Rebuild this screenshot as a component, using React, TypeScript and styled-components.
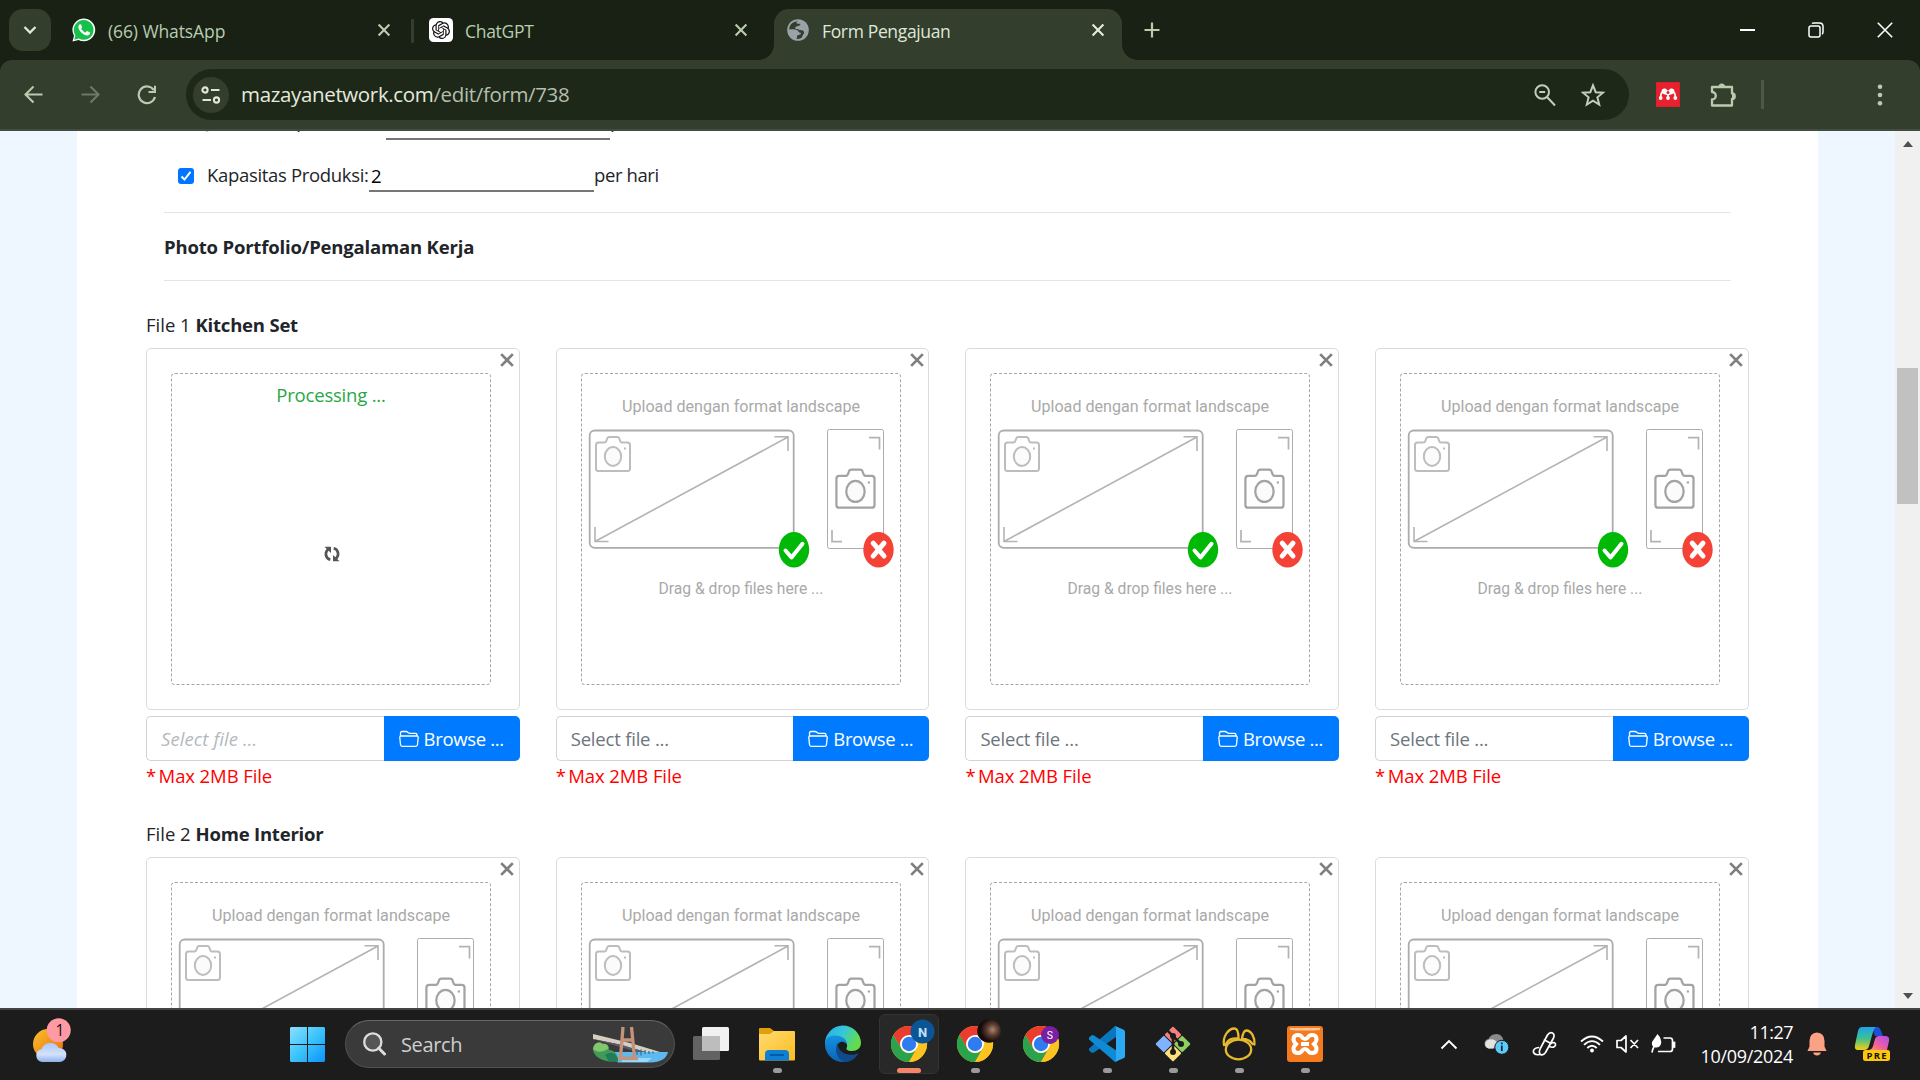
import React from "react";
import styled, { createGlobalStyle } from "styled-components";

const Global = createGlobalStyle`
  *, *::before, *::after { box-sizing: border-box; }
  html, body { margin: 0; padding: 0; overflow: hidden; background: #fff; }
  body { font-family: "Open Sans", "Noto Sans", sans-serif; }
  svg { display: block; flex: none; }
`;

const Screen = styled.div`
  width: 1920px;
  height: 1080px;
  display: flex;
  flex-direction: column;
  overflow: hidden;
`;

/* Text whose advance is tuned with letter spacing */
const Label = styled.span<{ size: number; ls?: number; color?: string; weight?: number }>`
  font-size: ${(p) => p.size}px;
  letter-spacing: ${(p) => p.ls ?? 0}px;
  color: ${(p) => p.color ?? "inherit"};
  font-weight: ${(p) => p.weight ?? 400};
  white-space: pre;
`;

/* ---------- browser chrome ---------- */
const TabStrip = styled.div`
  height: 60px;
  flex: none;
  background: #182114;
  display: flex;
  padding-left: 9px;
`;
const TabMenu = styled.div`
  width: 42px;
  height: 42px;
  margin: 9px 9px 0 0;
  border-radius: 14px;
  background: #333e2d;
  display: grid;
  place-items: center;
`;
const Tab = styled.div<{ $active?: boolean }>`
  position: relative;
  width: 348px;
  height: 51px;
  margin: 9px 9px 0 0;
  padding: 0 15px 9px 12px;
  display: flex;
  align-items: center;
  gap: 12px;
  color: ${(p) => (p.$active ? "#dfe8d8" : "#b9ccaf")};
  background: ${(p) => (p.$active ? "#333e2d" : "transparent")};
  border-radius: 15px 15px 0 0;
  &::before, &::after {
    content: "";
    display: ${(p) => (p.$active ? "block" : "none")};
    position: absolute;
    bottom: 0;
    width: 15px;
    height: 15px;
  }
  &::before { left: -15px; background: radial-gradient(circle at 0 0, transparent 14.5px, #333e2d 15px); }
  &::after { right: -15px; background: radial-gradient(circle at 100% 0, transparent 14.5px, #333e2d 15px); }
`;
const TabTitle = styled(Label)`
  flex: 1;
  padding-top: 1px;
`;
const TabDivider = styled.div`
  width: 3px;
  height: 24px;
  margin: 19px 3px 0 -6px;
  background: #333e2d;
  border-radius: 1px;
`;
const NewTab = styled.div`
  width: 42px;
  height: 42px;
  margin-top: 9px;
  display: grid;
  place-items: center;
`;
const WindowButtons = styled.div`
  margin-left: auto;
  display: flex;
  height: 59px;
  padding-right: 1px;
`;
const WindowButton = styled.div`
  width: 68.5px;
  display: grid;
  place-items: center;
`;
const ToolbarBack = styled.div`
  height: 71px;
  flex: none;
  background: #182114;
`;
const Toolbar = styled.div`
  height: 71px;
  background: #333e2d;
  border-bottom: 2px solid #434c41;
  border-radius: 12px 12px 0 0;
  display: flex;
  align-items: center;
  padding: 0 24px 0 5px;
`;
const NavButton = styled.div`
  width: 56.7px;
  display: grid;
  place-items: center;
`;
const Omnibox = styled.div`
  width: 1443px;
  height: 51px;
  margin-left: 11px;
  border-radius: 26px;
  background: #1e2819;
  display: flex;
  align-items: center;
  padding: 0 24px 0 7px;
`;
const SiteInfo = styled.div`
  width: 36px;
  height: 36px;
  border-radius: 50%;
  background: #333e2d;
  display: grid;
  place-items: center;
  margin-right: 12px;
`;
const Url = styled.div`
  flex: 1;
  display: flex;
  padding-bottom: 2px;
`;
const OmniActions = styled.div`
  display: flex;
  gap: 24px;
  align-items: center;
`;
const Extensions = styled.div`
  flex: 1;
  display: flex;
  align-items: center;
  padding-left: 27px;
  gap: 30px;
`;
const ToolDivider = styled.div`
  width: 3px;
  height: 29px;
  margin-left: -5px;
  background: #4b5a43;
`;
const MoreButton = styled.div`
  margin-left: auto;
  margin-right: 13.5px;
`;

/* ---------- web page ---------- */
const Viewport = styled.div`
  height: 877px;
  flex: none;
  display: flex;
  overflow: hidden;
  background: #eef7ff;
`;
const Page = styled.main`
  width: 1741px;
  margin: 0 77px;
  height: 877px;
  overflow: hidden;
  background: #fff;
  color: #212529;
  padding: 0 69px;
`;
const FormBlock = styled.div`
  margin: 0 18px;
`;
const FieldRow = styled.div<{ $top: number; $h: number; $left: number }>`
  display: flex;
  align-items: center;
  height: ${(p) => p.$h}px;
  margin-top: ${(p) => p.$top}px;
  padding-left: ${(p) => p.$left}px;
`;
const Check = styled.div`
  width: 16px;
  height: 16px;
  border-radius: 3px;
  background: #0075ff;
  display: grid;
  place-items: center;
  margin: 0 13px 2px 0;
`;
const FieldText = styled.div<{ $w?: number; $lift: number }>`
  width: ${(p) => (p.$w ? `${p.$w}px` : "auto")};
  padding-bottom: ${(p) => p.$lift}px;
  white-space: nowrap;
`;
const Underlined = styled.div<{ $w: number }>`
  width: ${(p) => p.$w}px;
  align-self: stretch;
  border-bottom: 2px solid #767676;
  padding: 0 0 1px 2px;
  color: #000;
  display: flex;
  align-items: center;
`;
const Rule = styled.div<{ $top: number }>`
  height: 1px;
  margin-top: ${(p) => p.$top}px;
  background: #e3e4e5;
`;
const Heading = styled.div`
  height: 67px;
  display: flex;
  align-items: center;
`;
const FileSection = styled.section<{ $top: number }>`
  margin-top: ${(p) => p.$top}px;
  height: 412px;
`;
const FileTitle = styled.div`
  height: 25px;
  display: flex;
  align-items: center;
  margin-bottom: 11px;
`;
const Columns = styled.div`
  display: grid;
  grid-template-columns: repeat(4, 373.6px);
  column-gap: 36.1px;
`;
const Card = styled.div`
  position: relative;
  height: 362px;
  border: 1px solid #d9dbdd;
  border-radius: 5px;
  padding: 24px;
`;
const CardClose = styled.div`
  position: absolute;
  top: 4px;
  right: 4.5px;
`;
const DropZone = styled.div`
  width: 320px;
  height: 312px;
  border: 1px dashed #a6a6a6;
  border-radius: 4px;
  display: flex;
  flex-direction: column;
  align-items: center;
`;
const Processing = styled.div`
  height: 44px;
  line-height: 41px;
  color: #28a745;
`;
const Spinner = styled.div`
  margin: 128px 0 0 2px;
`;
const InputGroup = styled.div`
  margin-top: 6px;
  height: 45px;
  display: flex;
`;
const FileInput = styled.div<{ $disabled?: boolean }>`
  flex: 1;
  border: 1px solid #ced4da;
  border-right: 0;
  border-radius: 5px 0 0 5px;
  display: flex;
  align-items: center;
  padding-left: 14px;
  color: ${(p) => (p.$disabled ? "#b4b9be" : "#6c757d")};
  font-style: ${(p) => (p.$disabled ? "italic" : "normal")};
`;
const Browse = styled.div`
  width: 136px;
  background: #007bff;
  border-radius: 0 5px 5px 0;
  color: #fff;
  display: flex;
  align-items: center;
  gap: 5px;
  padding-left: 15px;
`;
const MaxNote = styled.div`
  color: #f00;
  height: 31px;
  line-height: 29px;
`;
const ScrollTrack = styled.div`
  width: 25px;
  background: #f0f0f0;
  display: flex;
  flex-direction: column;
  align-items: center;
`;
const ScrollArrow = styled.div<{ $down?: boolean }>`
  border: 5.5px solid transparent;
  border-top: ${(p) => (p.$down ? "6px solid #505050" : "0")};
  border-bottom: ${(p) => (p.$down ? "0" : "6px solid #505050")};
  margin: ${(p) => (p.$down ? "auto 0 9px" : "10px 0 0")};
`;
const ScrollThumb = styled.div`
  width: 21px;
  height: 136px;
  margin-top: 221px;
  background: #c1c1c1;
`;

/* ---------- taskbar ---------- */
const Taskbar = styled.div`
  height: 72px;
  flex: none;
  background: #1c1c1c;
  border-top: 2px solid #434343;
  display: flex;
  color: #fff;
`;
const Widget = styled.div`
  width: 257px;
  padding: 8px 0 0 33px;
`;
const StartTile = styled.div`
  width: 88px;
  padding: 17px 0 0 33px;
`;
const SearchBox = styled.div`
  width: 330px;
  height: 48px;
  margin: 10px 12px 0 0;
  border-radius: 24px;
  background: #3a3a3a;
  border: 1px solid #505050;
  border-top-color: #666;
  display: flex;
  align-items: center;
  padding: 0 6px 0 17px;
  color: #cfcfcf;
`;
const SearchText = styled(Label)`
  flex: 1;
  padding-left: 15px;
`;
const Apps = styled.div`
  display: flex;
  gap: 6px;
  padding-top: 4px;
  margin-left: -6px;
`;
const AppTile = styled.div<{ $active?: boolean }>`
  width: 60px;
  height: 60px;
  border-radius: 6px;
  border: 1px solid ${(p) => (p.$active ? "#333" : "transparent")};
  background: ${(p) => (p.$active ? "#282828" : "transparent")};
  display: flex;
  flex-direction: column;
  align-items: center;
  padding-top: 11px;
  svg { overflow: visible; }
`;
const RunMark = styled.div<{ $active?: boolean }>`
  width: ${(p) => (p.$active ? 24 : 9)}px;
  height: 5px;
  flex: none;
  margin-top: 6px;
  border-radius: 3px;
  background: ${(p) => (p.$active ? "#f5846a" : "#9a9a9a")};
`;
const Tray = styled.div`
  margin-left: auto;
  display: flex;
  align-items: center;
  height: 68px;
  padding-right: 30px;
`;
const TrayIcon = styled.div<{ $w: number; $r: number }>`
  width: ${(p) => p.$w}px;
  margin-right: ${(p) => p.$r}px;
`;
const Clock = styled.div`
  width: 106px;
  display: flex;
  flex-direction: column;
  align-items: flex-end;
  line-height: 24px;
  margin-right: 14px;
`;

/* ---------- icons ---------- */
const Cross = ({ size, color, w }: { size: number; color: string; w: number }) => (
  <svg width={size} height={size} viewBox="0 0 12 12">
    <path d="M1 1L11 11M11 1L1 11" stroke={color} strokeWidth={w} />
  </svg>
);
const TabClose = ({ color }: { color: string }) => (
  <svg width="18" height="18" viewBox="0 0 18 18">
    <path d="M3.600 3.600L14.400 14.400M14.400 3.600L3.600 14.400" stroke={color} strokeWidth="2.100" />
  </svg>
);
const WhatsApp = () => (
  <svg width="24" height="24" viewBox="0 0 24 24">
    <path d="M.5 23.500L2 17.700A11.400 11.400 0 1 1 6.500 22Z" fill="#fff" />
    <path d="M2.200 21.800L3.400 17.400A9.900 9.900 0 1 1 6.900 20.600Z" fill="#16c04a" />
    <path d="M8 6.300c-.6 0-1.600.9-1.600 2.600 0 3.700 5.300 8.500 8.800 8.500 1.700 0 2.900-1.200 2.900-2.500 0-.4-.1-.5-.5-.7l-2.200-1c-.5-.2-.7 0-1 .4-.6.8-.8 1-1.200.8-1.900-.8-3.200-2.100-4-3.600-.2-.4.700-.9.900-1.500.1-.3-.7-2-1-2.600-.2-.4-.5-.4-1.100-.4z" fill="#fff" />
  </svg>
);
const ChatGPT = () => (
  <svg width="24" height="24" viewBox="0 0 24 24">
    <rect width="24" height="24" rx="4.500" fill="#fff" />
    <g transform="translate(3 3) scale(.75)">
      <path fill="#111" d="M22.282 9.821a5.985 5.985 0 0 0-.516-4.910 6.046 6.046 0 0 0-6.510-2.900A6.065 6.065 0 0 0 4.981 4.182a5.985 5.985 0 0 0-3.998 2.900 6.046 6.046 0 0 0 .743 7.097 5.980 5.980 0 0 0 .510 4.911 6.051 6.051 0 0 0 6.515 2.900A5.985 5.985 0 0 0 13.260 24a6.056 6.056 0 0 0 5.772-4.206 5.990 5.990 0 0 0 3.998-2.900 6.056 6.056 0 0 0-.748-7.073zM13.260 22.430a4.476 4.476 0 0 1-2.876-1.040l.141-.081 4.779-2.758a.795.795 0 0 0 .392-.681v-6.737l2.020 1.169a.071.071 0 0 1 .038.052v5.583a4.504 4.504 0 0 1-4.494 4.494zM3.600 18.304a4.471 4.471 0 0 1-.535-3.014l.142.085 4.783 2.759a.771.771 0 0 0 .781 0l5.843-3.369v2.332a.080.080 0 0 1-.033.062L9.740 19.950a4.500 4.500 0 0 1-6.140-1.646zM2.341 7.896a4.485 4.485 0 0 1 2.365-1.973v5.677a.766.766 0 0 0 .388.677l5.815 3.354-2.020 1.169a.076.076 0 0 1-.071 0l-4.830-2.787A4.504 4.504 0 0 1 2.341 7.896zm16.597 3.856l-5.834-3.388L15.120 7.200a.076.076 0 0 1 .071 0l4.830 2.791a4.494 4.494 0 0 1-.677 8.105v-5.678a.790.790 0 0 0-.407-.667zm2.010-3.023l-.142-.085-4.774-2.782a.776.776 0 0 0-.785 0L9.410 9.230V6.897a.066.066 0 0 1 .028-.061l4.830-2.787a4.500 4.500 0 0 1 6.680 4.660zM8.307 12.863l-2.020-1.164a.080.080 0 0 1-.038-.057V6.075a4.500 4.500 0 0 1 7.376-3.454l-.142.081-4.778 2.758a.795.795 0 0 0-.393.682zm1.098-2.366l2.602-1.500 2.607 1.500v2.999l-2.598 1.500-2.607-1.500z" />
    </g>
  </svg>
);
const Globe = () => (
  <svg width="24" height="24" viewBox="0 0 24 24">
    <circle cx="12" cy="12" r="10.800" fill="#9ba1a9" />
    <path d="M12.500 3.200C6.500 3 3.200 7 3.200 11.500c3-.6 6-.4 7.800.6 1.700 1 1.500 2.700 3.300 2.700 1 0 .9 1.300-.3 1.600-2.300.6-3.500 1-3 2.600.2.900-.3 1.500-.6 1.900 3 .2 5.800-.6 6-3 .1-1.300 1.600-1.300 1.700-3.200.1-1.700-1.500-2.700-3.600-2.700-1 0-2-.1-2.500-1-.8.2-2.300.3-2.700-.7-.4-1.200.8-2 2-2 .9 0 1-.7 1.900-.8 1.400-.1 1.500-1.300.6-1.700-1.200-.5-2.800.4-3.300-.8-.3-.9.7-1.500 2-1.800z" fill="#333e2d" />
  </svg>
);
const Mendeley = () => (
  <svg width="24" height="25" viewBox="0 0 24 25">
    <rect width="24" height="25" fill="#d9202c" />
    <rect x="1" y="1" width="22" height="23" fill="#e9212e" />
    <g fill="#fff">
      <path d="M4.700 15C4.700 11.500 6 9.500 8.300 9.500M19.300 15C19.300 11.500 18 9.500 15.700 9.500M12 11V15" fill="none" stroke="#fff" strokeWidth="1.700" />
      <path d="M5.500 9A3 3 0 0 1 11 8Q12 9 13 8A3 3 0 0 1 18.500 9Q18.500 12 15 12.500L12 13.500L9 12.500Q5.500 12 5.500 9Z" />
      <circle cx="12" cy="10.600" r="1.500" fill="#e9212e" />
      <circle cx="4.700" cy="16" r="1.900" /><circle cx="12" cy="16" r="1.900" /><circle cx="19.300" cy="16" r="1.900" />
    </g>
  </svg>
);

const Camera = ({ x, y, s, color }: { x: number; y: number; s: number; color: string }) => (
  <g transform={`translate(${x} ${y}) scale(${s})`} fill="none" stroke={color} strokeWidth="2">
    <path d="M3.500 6.500H9.500Q11 6.500 11.500 4.500L12 3Q12.500 1 14.500 1H22Q24 1 24.500 3L25 4.500Q25.500 6.500 27 6.500H32.500Q35 6.500 35 9V32.500Q35 35 32.500 35H3.500Q1 35 1 32.500V9Q1 6.500 3.500 6.500Z" />
    <ellipse cx="18" cy="20.500" rx="8.200" ry="9.400" fill="#fbfbfb" />
    <path d="M29 12.500h2" strokeWidth="1.800" />
  </g>
);

const UploadHint = () => (
  <svg width="318" height="310" viewBox="582 374 318 310" fontFamily="Roboto, sans-serif" fill="#a9a9a9">
    <text x="622" y="412" fontSize="16.500" textLength="238" lengthAdjust="spacingAndGlyphs">Upload dengan format landscape</text>
    <g fill="none" stroke="#acacac">
      <rect x="589.700" y="430.500" width="204" height="117.300" rx="5" strokeWidth="1.800" />
      <path d="M595 541.500L788 437M774.500 436.700H788V451M595 527V541.500H608.500" strokeWidth="1.600" stroke="#b3b3b3" />
      <rect x="827.500" y="429.500" width="56" height="119" rx="2" strokeWidth="1" />
      <path d="M869 437.700H879.500V449.500M832 530V541.700H842" strokeWidth="1.700" stroke="#b3b3b3" />
    </g>
    <Camera x={595} y={436} s={1} color="#bdbdbd" />
    <Camera x={835.3} y={468.5} s={1.12} color="#a3a3a3" />
    <ellipse cx="794" cy="549.700" rx="15.200" ry="17.800" fill="#00b906" />
    <path d="M785.500 550.500L791.500 557.500L802.500 543.800" fill="none" stroke="#fff" strokeWidth="4" strokeLinecap="round" strokeLinejoin="round" />
    <ellipse cx="878.500" cy="549.700" rx="15.200" ry="17.800" fill="#f44336" />
    <path d="M873.200 543.200L884 556M884 543.200L873.200 556" stroke="#fff" strokeWidth="5" strokeLinecap="round" />
    <text x="658.500" y="594" fontSize="16.500" textLength="165" lengthAdjust="spacingAndGlyphs">Drag &amp; drop files here ...</text>
  </svg>
);

const ChromeLogo = ({ children }: { children?: React.ReactNode }) => (
  <svg width="36" height="36" viewBox="0 0 36 36">
    <circle cx="18" cy="18" r="18" fill="#fbbc05" />
    <path d="M18 9H33.600A18 18 0 0 0 2.400 9L10.200 22.500Z" fill="#ea3d30" />
    <path d="M2.400 9A18 18 0 0 0 18 36L25.800 22.500A9 9 0 0 1 10.200 22.500Z" fill="#2ba24c" />
    <path d="M33.600 9H18L25.800 22.500L18 36A18 18 0 0 0 33.600 9Z" fill="#fcc420" />
    <circle cx="18" cy="18" r="9" fill="#fff" />
    <circle cx="18" cy="18" r="7.200" fill="#2f7bf0" />
    {children}
  </svg>
);

const Weather = () => (
  <svg width="40" height="46" viewBox="33 1018 40 46">
    <defs>
      <linearGradient id="sun" x1="0" y1="0" x2="1" y2="1"><stop offset="0" stopColor="#f6c12c" /><stop offset="1" stopColor="#f0690f" /></linearGradient>
      <linearGradient id="cloud" x1="0" y1="0" x2="0" y2="1"><stop offset="0" stopColor="#a9c8fa" /><stop offset=".6" stopColor="#d3e2fb" /><stop offset="1" stopColor="#8fb0ea" /></linearGradient>
    </defs>
    <circle cx="48" cy="1044" r="15" fill="url(#sun)" />
    <path d="M42 1062a6.500 6.500 0 0 1-.6-12.800 9.500 9.500 0 0 1 17.300-1.200A7 7 0 0 1 60 1062Z" fill="url(#cloud)" />
    <circle cx="58.700" cy="1030.300" r="12" fill="#ff99a4" />
    <text x="55.500" y="1036" fontSize="15.500" fill="#111" fontFamily="Open Sans, sans-serif">1</text>
  </svg>
);
const Bridge = () => (
  <svg width="76" height="38" viewBox="0 0 76 38">
    <path d="M12 27H76Q74 37 58 37.500H26Z" fill="#5db9ee" />
    <path d="M30 33h30l-5 4H30z" fill="#9bd9fb" />
    <path d="M1 9L40 18.500L68 27H50L30 20L1 14Z" fill="#d6cfc0" />
    <path d="M1 14L30 20L54 27H46L28 22Z" fill="#5d5870" />
    <path d="M45 24v6M49 24.500v6M53 25v4M57 26v3M61 26.500v2" stroke="#34729b" strokeWidth="1.300" />
    <path d="M31 2L28.500 33M39.500 2L42.500 33M31 15H41M26 33.500H46" stroke="#c4937a" strokeWidth="3.300" fill="none" />
    <path d="M1 25C1 17 8 16 11 19c4-1 7 3 6 6 6 0 9 5 9 11.500H17C8 35 2 31 1 25Z" fill="#3f9b57" />
    <path d="M1 24C2 17 8 16 11 19c4-1 6 3 5 5-5 3-11 4-15 0z" fill="#83c66b" />
    <path d="M13 30c6-5 13-1 13 6.500h-9z" fill="#217b5c" />
  </svg>
);
const WinLogo = () => (
  <svg width="35" height="35" viewBox="0 0 35 35">
    <defs><linearGradient id="win" gradientUnits="userSpaceOnUse" x1="0" y1="0" x2="35" y2="35"><stop offset="0" stopColor="#8be0ff" /><stop offset=".5" stopColor="#3cc4fb" /><stop offset="1" stopColor="#0a93fb" /></linearGradient></defs>
    <path d="M1 0H17V17H0V1ZM18 0H34L35 1V17H18ZM0 18H17V35H1L0 34ZM18 18H35V34L34 35H18Z" fill="url(#win)" />
  </svg>
);
const TaskView = () => (
  <svg width="36" height="36" viewBox="0 0 36 36">
    <rect x="0" y="10" width="27" height="24" rx="1.500" fill="#636363" />
    <rect x="9" y="1" width="27" height="24" rx="1.500" fill="#f1f1f1" />
    <path d="M9 10H27V25H9Z" fill="#bdbdbd" />
  </svg>
);
const Explorer = () => (
  <svg width="36" height="36" viewBox="0 0 36 36">
    <defs><linearGradient id="fold" x1="0" y1="0" x2="1" y2="1"><stop offset="0" stopColor="#ffda70" /><stop offset="1" stopColor="#fcbd20" /></linearGradient></defs>
    <path d="M0 3Q0 2 1 2H11L15 5V9H0Z" fill="#e0a108" />
    <path d="M0 8H11L15 5H35Q36 5 36 6V33Q36 34.500 35 34.500H1Q0 34.500 0 33Z" fill="url(#fold)" />
    <path d="M6 34.500V28Q6 24 10 24H26Q30 24 30 28V34.500Z" fill="#0f7fd6" />
    <path d="M11 29H25" stroke="#064f91" strokeWidth="1.500" />
  </svg>
);
const Edge = () => (
  <svg width="36" height="36" viewBox="0 0 36 36">
    <defs>
      <linearGradient id="e1" x1="0" y1="0" x2="1" y2=".4"><stop offset="0" stopColor="#2aa9e0" /><stop offset=".5" stopColor="#34c6e0" /><stop offset="1" stopColor="#63dc4b" /></linearGradient>
      <linearGradient id="e2" x1="0" y1="0" x2="0" y2="1"><stop offset="0" stopColor="#1493df" /><stop offset="1" stopColor="#0a63b8" /></linearGradient>
    </defs>
    <path d="M0 18A18 18 0 0 1 36 17C36 22 32 25 27 25C22 25 20.500 23 22 21C23 17 20 14 16 13.500C9 12.500 3 14 0 18Z" fill="url(#e1)" />
    <path d="M0 18C0 12 5 9 11 9.500C18 10 22.500 14 22 19C21 16 14 13 12 21C11 28 17 33 25 33.500Q21.500 36 18 36A18 18 0 0 1 0 18Z" fill="url(#e2)" />
    <path d="M14 15.500C9 20 10 33 20 36C27 36 32 31 33.500 27C29 30 21 29 17 26C13 23 12 18 14 15.500Z" fill="#114a8b" />
  </svg>
);
const VSCode = () => (
  <svg width="36" height="36" viewBox="0 0 36 36">
    <path d="M26 0L35 4V13L27 11L5 26.500L3 27L0 24.500V22.500Z" fill="#0a76be" />
    <path d="M0 11.500V13.500L26 36L28 35V25L5 9.500L3 9Z" fill="#0f8bd5" />
    <path d="M26 0L35 4Q36 4.500 36 6V30Q36 31.500 35 32L26 36Q27 35 27 33V3Q27 1 26 0Z" fill="#2baaf3" />
  </svg>
);
const GitBash = () => (
  <svg width="36" height="36" viewBox="0 0 36 36">
    <g transform="rotate(45 18 18)">
      <rect x="5.500" y="5.500" width="12" height="12" rx="1" fill="#f98080" />
      <rect x="18.500" y="5.500" width="12" height="12" rx="1" fill="#8ccf63" />
      <rect x="5.500" y="18.500" width="12" height="12" rx="1" fill="#80b3ff" />
      <rect x="18.500" y="18.500" width="12" height="12" rx="1" fill="#ffe07a" />
    </g>
    <path d="M11 3L18 10V26M18 10L26 18" stroke="#1c1c1c" strokeWidth="2.600" fill="none" />
    <circle cx="18" cy="10" r="3" fill="#1c1c1c" /><circle cx="18" cy="26" r="3" fill="#1c1c1c" /><circle cx="26" cy="18" r="3" fill="#1c1c1c" />
  </svg>
);
const Navicat = () => (
  <svg width="36" height="36" viewBox="0 0 36 36" fill="none" stroke="#e8b92e" strokeWidth="2.300" strokeLinecap="round">
    <ellipse cx="17.500" cy="23.500" rx="12.700" ry="9.800" />
    <path d="M3 19C1.500 11 7 2.500 13.500 2.500C16.500 2.500 17.500 7 17.500 12.500C11 12 7 13 4.500 19" />
    <path d="M33.500 18.500C34 11 30 4.500 25.500 4.500C23 4.500 21.500 9 21 13C26 13 29 14 31.500 18" />
  </svg>
);
const Xampp = () => (
  <svg width="36" height="36" viewBox="0 0 36 36">
    <rect width="36" height="36" rx="3" fill="#f47a20" />
    <path d="M3 2H33V4Q18 5 3 4Z" fill="#ffc79b" />
    <path d="M14 18H22M9 18C5 14 6 9 11 9C16 9 14 13 18 13C22 13 20 9 25 9C30 9 31 14 27 18C31 22 30 27 25 27C20 27 22 23 18 23C14 23 16 27 11 27C6 27 5 22 9 18Z" fill="none" stroke="#fff" strokeWidth="4" />
  </svg>
);
const Copilot = () => (
  <svg width="36" height="36" viewBox="0 0 36 36">
    <defs>
      <linearGradient id="c1" x1="0" y1="0" x2="0" y2="1"><stop offset="0" stopColor="#1ba4f0" /><stop offset=".5" stopColor="#3fc08f" /><stop offset="1" stopColor="#f6cf10" /></linearGradient>
      <linearGradient id="c2" x1="1" y1="0" x2="0" y2="1"><stop offset="0" stopColor="#b04df0" /><stop offset=".6" stopColor="#f0609c" /><stop offset="1" stopColor="#ff9a52" /></linearGradient>
    </defs>
    <path d="M18 1H23Q26 1 27 5L29 10H21Z" fill="#1c4fd8" />
    <path d="M8 1H22Q20 2 19 6L15 20Q14 24 10 24H4Q0 24 1 19L4 5Q5 1 8 1Z" fill="url(#c1)" />
    <path d="M25 10H31Q36 10 35 15L33 24H14Q18 24 19 20L21 13Q22 10 25 10Z" fill="url(#c2)" />
    <rect x="9" y="24" width="27" height="11" rx="2.500" fill="#ffc60b" />
    <text x="12.500" y="33" fontSize="9.500" fontWeight="700" fontFamily="Open Sans, sans-serif" fill="#111" textLength="20">PRE</text>
  </svg>
);

/* ---------- composed parts ---------- */
const UploadColumn = ({ processing }: { processing?: boolean }) => (
  <div>
    <Card>
      <CardClose><Cross size={14} color="#7f7f7f" w={2.3} /></CardClose>
      <DropZone>
        {processing ? (
          <>
            <Processing><Label size={18.5} ls={-0.2}>Processing ...</Label></Processing>
            <Spinner>
              <svg width="16" height="16" viewBox="0 0 16 16" fill="none" stroke="#555" strokeWidth="2.700">
                <path d="M6.300 13.800C1.200 12.500.5 6 4.500 3M9.700 2.200C14.800 3.500 15.500 10 11.500 13" />
                <path d="M.5 .8H7V7ZM15.500 15.200H9V9Z" fill="#555" stroke="none" />
              </svg>
            </Spinner>
          </>
        ) : (
          <UploadHint />
        )}
      </DropZone>
    </Card>
    <InputGroup>
      <FileInput $disabled={processing}><Label size={18.5} ls={processing ? 0.1 : -0.2}>Select file ...</Label></FileInput>
      <Browse>
        <svg width="20" height="18" viewBox="0 0 20 18" fill="none" stroke="#fff" strokeWidth="1.300" strokeLinejoin="round">
          <path d="M1.500 6V3Q1.500 1.500 3 1.500H7Q8 1.500 9 2.500Q10 3.300 11 3.300H16.500Q18 3.300 18 5V6" />
          <path d="M2.200 6H17.800Q19.300 6 19.200 7.500L18.500 14.500Q18.300 16.300 16.700 16.300H3.300Q1.700 16.300 1.500 14.500L.8 7.500Q.7 6 2.200 6Z" />
        </svg>
        <Label size={18.5} ls={-0.35}>Browse ...</Label>
      </Browse>
    </InputGroup>
    <MaxNote><Label size={18.5} ls={-1.2}>* </Label><Label size={18.5} ls={-0.1}>Max 2MB File</Label></MaxNote>
  </div>
);

const Section = ({ n, name, top, first }: { n: number; name: string; top: number; first?: boolean }) => (
  <FileSection $top={top}>
    <FileTitle>
      <Label size={18.5} ls={0}>{`File ${n} `}</Label>
      <Label size={18.5} ls={-0.2} weight={700}>{name}</Label>
    </FileTitle>
    <Columns>
      <UploadColumn processing={first} />
      <UploadColumn />
      <UploadColumn />
      <UploadColumn />
    </Columns>
  </FileSection>
);

export default function App() {
  const c = "#b9ccaf";
  return (
    <Screen>
      <Global />
      <TabStrip>
        <TabMenu>
          <svg width="14" height="10" viewBox="0 0 14 10"><path d="M1.500 2L7 7.500L12.500 2" fill="none" stroke="#dfe8d8" strokeWidth="2.300" /></svg>
        </TabMenu>
        <Tab><WhatsApp /><TabTitle size={17.5} ls={-0.1}>(66) WhatsApp</TabTitle><TabClose color={c} /></Tab>
        <TabDivider />
        <Tab><ChatGPT /><TabTitle size={17.5} ls={-0.3}>ChatGPT</TabTitle><TabClose color={c} /></Tab>
        <Tab $active><Globe /><TabTitle size={17.5} ls={-0.35}>Form Pengajuan</TabTitle><TabClose color="#e4ecdd" /></Tab>
        <NewTab>
          <svg width="16" height="16" viewBox="0 0 16 16"><path d="M8 .5V15.500M.5 8H15.500" stroke={c} strokeWidth="2.200" /></svg>
        </NewTab>
        <WindowButtons>
          <WindowButton><svg width="15" height="2" viewBox="0 0 15 2"><path d="M0 1H15" stroke="#fff" strokeWidth="2" /></svg></WindowButton>
          <WindowButton>
            <svg width="16" height="16" viewBox="0 0 16 16" fill="none" stroke="#fff" strokeWidth="1.500">
              <rect x="1" y="4" width="11" height="11" rx="2" /><path d="M4 1.500Q4.500 1 6 1H11.500Q15 1 15 4.500V10Q15 11.500 14 12" />
            </svg>
          </WindowButton>
          <WindowButton><svg width="16" height="16" viewBox="0 0 16 16"><path d="M.8.8L15.200 15.200M15.200.8L.8 15.200" stroke="#fff" strokeWidth="1.600" /></svg></WindowButton>
        </WindowButtons>
      </TabStrip>
      <ToolbarBack>
        <Toolbar>
          <NavButton><svg width="19" height="19" viewBox="0 0 19 19"><path d="M18.500 9.500H2M9.500 1.500L1.500 9.500L9.500 17.500" fill="none" stroke={c} strokeWidth="2.100" /></svg></NavButton>
          <NavButton><svg width="19" height="19" viewBox="0 0 19 19"><path d="M.5 9.500H17M9.500 1.500L17.500 9.500L9.500 17.500" fill="none" stroke="#6d7a66" strokeWidth="2.100" /></svg></NavButton>
          <NavButton><svg width="20" height="20" viewBox="0 0 20 20"><path d="M16.800 5A8.300 8.300 0 1 0 18 12" fill="none" stroke={c} strokeWidth="2.200" /><path d="M19 .8V8H11.500V6H17V.8Z" fill={c} /></svg></NavButton>
          <Omnibox>
            <SiteInfo>
              <svg width="20" height="18" viewBox="0 0 20 18" fill="none" stroke="#dfe8d8" strokeWidth="2.100"><circle cx="4" cy="4" r="2.600" /><path d="M10 4H18.500M1.500 14H10" /><circle cx="15.500" cy="14" r="2.600" /></svg>
            </SiteInfo>
            <Url>
              <Label size={20.5} ls={-0.35} color="#e3ebdd">mazayanetwork.com</Label>
              <Label size={20.5} ls={-0.35} color="#b4bfae">/edit/form/738</Label>
            </Url>
            <OmniActions>
              <svg width="24" height="24" viewBox="0 0 24 24" fill="none" stroke="#c3cdbb" strokeWidth="2"><circle cx="9.200" cy="9" r="6.800" /><path d="M14 14L22 22.500M6.300 9H12.200" /></svg>
              <svg width="24" height="24" viewBox="0 0 24 24"><path d="M12 2.300L14.700 9.200L22 9.700L16.400 14.300L18.200 21.500L12 17.600L5.800 21.500L7.600 14.300L2 9.700L9.300 9.200Z" fill="none" stroke="#c3cdbb" strokeWidth="2" /></svg>
            </OmniActions>
          </Omnibox>
          <Extensions>
            <Mendeley />
            <svg width="26" height="26" viewBox="0 0 26 26"><path d="M3.500 5H22V11.500A2.500 2.500 0 0 1 22 17V23.500H2V17.500A3.700 3.700 0 0 0 2 10V5Z" fill="none" stroke={c} strokeWidth="2.300" strokeLinejoin="round" /><path d="M8.500 5a3.300 3.600 0 0 1 6.600 0zM22 10.500a3 3.500 0 0 1 0 7z" fill={c} /></svg>
            <ToolDivider />
            <MoreButton><svg width="6" height="22" viewBox="0 0 6 22" fill={c}><circle cx="3" cy="2.700" r="2.300" /><circle cx="3" cy="11" r="2.300" /><circle cx="3" cy="19.300" r="2.300" /></svg></MoreButton>
          </Extensions>
        </Toolbar>
      </ToolbarBack>

      <Viewport>
        <Page>
          <FormBlock>
            <FieldRow $top={-21} $h={30} $left={43}>
              <FieldText $w={179} $lift={9}><Label size={18.5} ls={0}>Jumlah, kapasitas</Label></FieldText>
              <Underlined $w={224} />
              <FieldText $lift={9}><Label size={18.5} ls={-0.35}>per</Label></FieldText>
            </FieldRow>
            <FieldRow $top={21} $h={31} $left={14}>
              <Check><svg width="12" height="12" viewBox="0 0 12 12"><path d="M1.500 6.500L4.500 9.500L10.500 1.800" fill="none" stroke="#fff" strokeWidth="2" /></svg></Check>
              <FieldText $w={162} $lift={5}><Label size={18.5} ls={-0.32}>Kapasitas Produksi:</Label></FieldText>
              <Underlined $w={225}><Label size={18.5}>2</Label></Underlined>
              <FieldText $lift={5}><Label size={18.5} ls={-0.4}>per hari</Label></FieldText>
            </FieldRow>
            <Rule $top={20} />
            <Heading><Label size={18.5} ls={-0.18} weight={700}>Photo Portfolio/Pengalaman Kerja</Label></Heading>
            <Rule $top={0} />
          </FormBlock>
          <Section n={1} name="Kitchen Set" top={31} first />
          <Section n={2} name="Home Interior" top={97} />
        </Page>
        <ScrollTrack><ScrollArrow /><ScrollThumb /><ScrollArrow $down /></ScrollTrack>
      </Viewport>

      <Taskbar>
        <Widget><Weather /></Widget>
        <StartTile><WinLogo /></StartTile>
        <SearchBox>
          <svg width="23" height="24" viewBox="0 0 23 24" fill="none" stroke="#ddd" strokeWidth="2.300"><circle cx="9.800" cy="10" r="8.600" fill="#555" /><path d="M15.800 16.200L21.500 22" strokeWidth="3" strokeLinecap="round" /></svg>
          <SearchText size={20} ls={-0.35}>Search</SearchText>
          <Bridge />
        </SearchBox>
        <Apps>
          <AppTile><TaskView /></AppTile>
          <AppTile><Explorer /><RunMark /></AppTile>
          <AppTile><Edge /></AppTile>
          <AppTile $active>
            <ChromeLogo><circle cx="31.500" cy="5.500" r="12" fill="#0b5596" /><text x="27" y="10.500" fontSize="13" fontWeight="700" fill="#c5e3f7" fontFamily="Roboto, sans-serif">N</text></ChromeLogo>
            <RunMark $active />
          </AppTile>
          <AppTile>
            <ChromeLogo>
              <defs><radialGradient id="face" cx=".65" cy=".45" r=".5"><stop offset="0" stopColor="#a98672" /><stop offset=".5" stopColor="#5a3a30" /><stop offset="1" stopColor="#150c0a" /></radialGradient></defs>
              <circle cx="32" cy="5" r="11.800" fill="url(#face)" />
            </ChromeLogo>
            <RunMark />
          </AppTile>
          <AppTile>
            <ChromeLogo><circle cx="27" cy="9" r="9" fill="#7b1fa2" /><text x="23.800" y="12.800" fontSize="10.500" fill="#fff" fontFamily="Roboto, sans-serif">S</text></ChromeLogo>
          </AppTile>
          <AppTile><VSCode /><RunMark /></AppTile>
          <AppTile><GitBash /><RunMark /></AppTile>
          <AppTile><Navicat /><RunMark /></AppTile>
          <AppTile><Xampp /><RunMark /></AppTile>
        </Apps>
        <Tray>
          <TrayIcon $w={18} $r={26}><svg width="18" height="11" viewBox="0 0 18 11"><path d="M1.500 9.500L9 2L16.500 9.500" fill="none" stroke="#fff" strokeWidth="1.900" /></svg></TrayIcon>
          <TrayIcon $w={25} $r={23}>
            <svg width="25" height="22" viewBox="0 0 25 22"><path d="M5 15.500A4.800 4.800 0 0 1 4.500 6A8 8 0 0 1 19 5.500L21 15.500Z" fill="#8b8b8b" /><path d="M4.500 15.500A4.500 4.500 0 0 1 3 7.500Q9 4 14 10L9 15.500Z" fill="#e2e2e2" /><circle cx="17.800" cy="14.300" r="7" fill="#5ccbfa" stroke="#1c1c1c" /><path d="M17.800 12.500V18M17.800 9.500V11.300" stroke="#123" strokeWidth="1.700" /></svg>
          </TrayIcon>
          <TrayIcon $w={25} $r={23}>
            <svg width="25" height="26" viewBox="0 0 25 26" fill="none" stroke="#fff" strokeWidth="1.700" strokeLinejoin="round" strokeLinecap="round"><path d="M8 18L15.500 4Q18 .5 20.500 2Q23 3.500 21.500 7L13.500 21.500Q11 25 8.500 23.500Q6.500 22 8 18Z" /><path d="M18.500 12Q24 10.500 23.500 14Q22.500 17.500 17 15.500M6.500 16.500Q.5 17.500 1.500 21.500Q3 24.500 7.500 23.500M12.500 9L19 12.500" /></svg>
          </TrayIcon>
          <TrayIcon $w={24} $r={12}>
            <svg width="24" height="18" viewBox="0 0 24 18" fill="none" stroke="#fff" strokeWidth="1.800"><path d="M1 6.500Q12-3.500 23 6.500M4 9.800Q12 2.500 20 9.800M7.300 13Q12 8.500 16.700 13" /><circle cx="12" cy="15.500" r="1.900" fill="#fff" stroke="none" /></svg>
          </TrayIcon>
          <TrayIcon $w={23} $r={12}>
            <svg width="23" height="18" viewBox="0 0 23 18" fill="none" stroke="#fff" strokeWidth="1.700" strokeLinejoin="round"><path d="M1 5.500H5L10 1V17L5 12.500H1ZM14.500 5L22 13M22 5L14.500 13" /></svg>
          </TrayIcon>
          <TrayIcon $w={25} $r={11}>
            <svg width="25" height="20" viewBox="0 0 25 20" fill="none" stroke="#fff" strokeWidth="1.700"><path d="M12.500 4H19Q21.500 4 21.500 6.500V15Q21.500 17.500 19 17.500H7" /><path d="M22 8.500H23.500V13H22Z" fill="#fff" /><path d="M6.500 0Q11 5 10 10Q8.500 14 4.500 13.500Q0 12.500 1 8Q3 5 6.500 0Z" fill="#fff" stroke="none" /><path d="M1 18.500Q2 12 7 8" /></svg>
          </TrayIcon>
          <Clock><Label size={18} ls={-0.5}>11:27</Label><Label size={18} ls={-0.3}>10/09/2024</Label></Clock>
          <TrayIcon $w={20} $r={27}>
            <svg width="20" height="24" viewBox="0 0 20 24" fill="#fba284"><path d="M10 .5Q17.500 1 17.500 9V14.500L19.500 19H.5L2.500 14.500V9Q2.500 1 10 .5ZM6 20.500H14Q13 23.500 10 23.500Q7 23.500 6 20.500Z" /></svg>
          </TrayIcon>
          <Copilot />
        </Tray>
      </Taskbar>
    </Screen>
  );
}
